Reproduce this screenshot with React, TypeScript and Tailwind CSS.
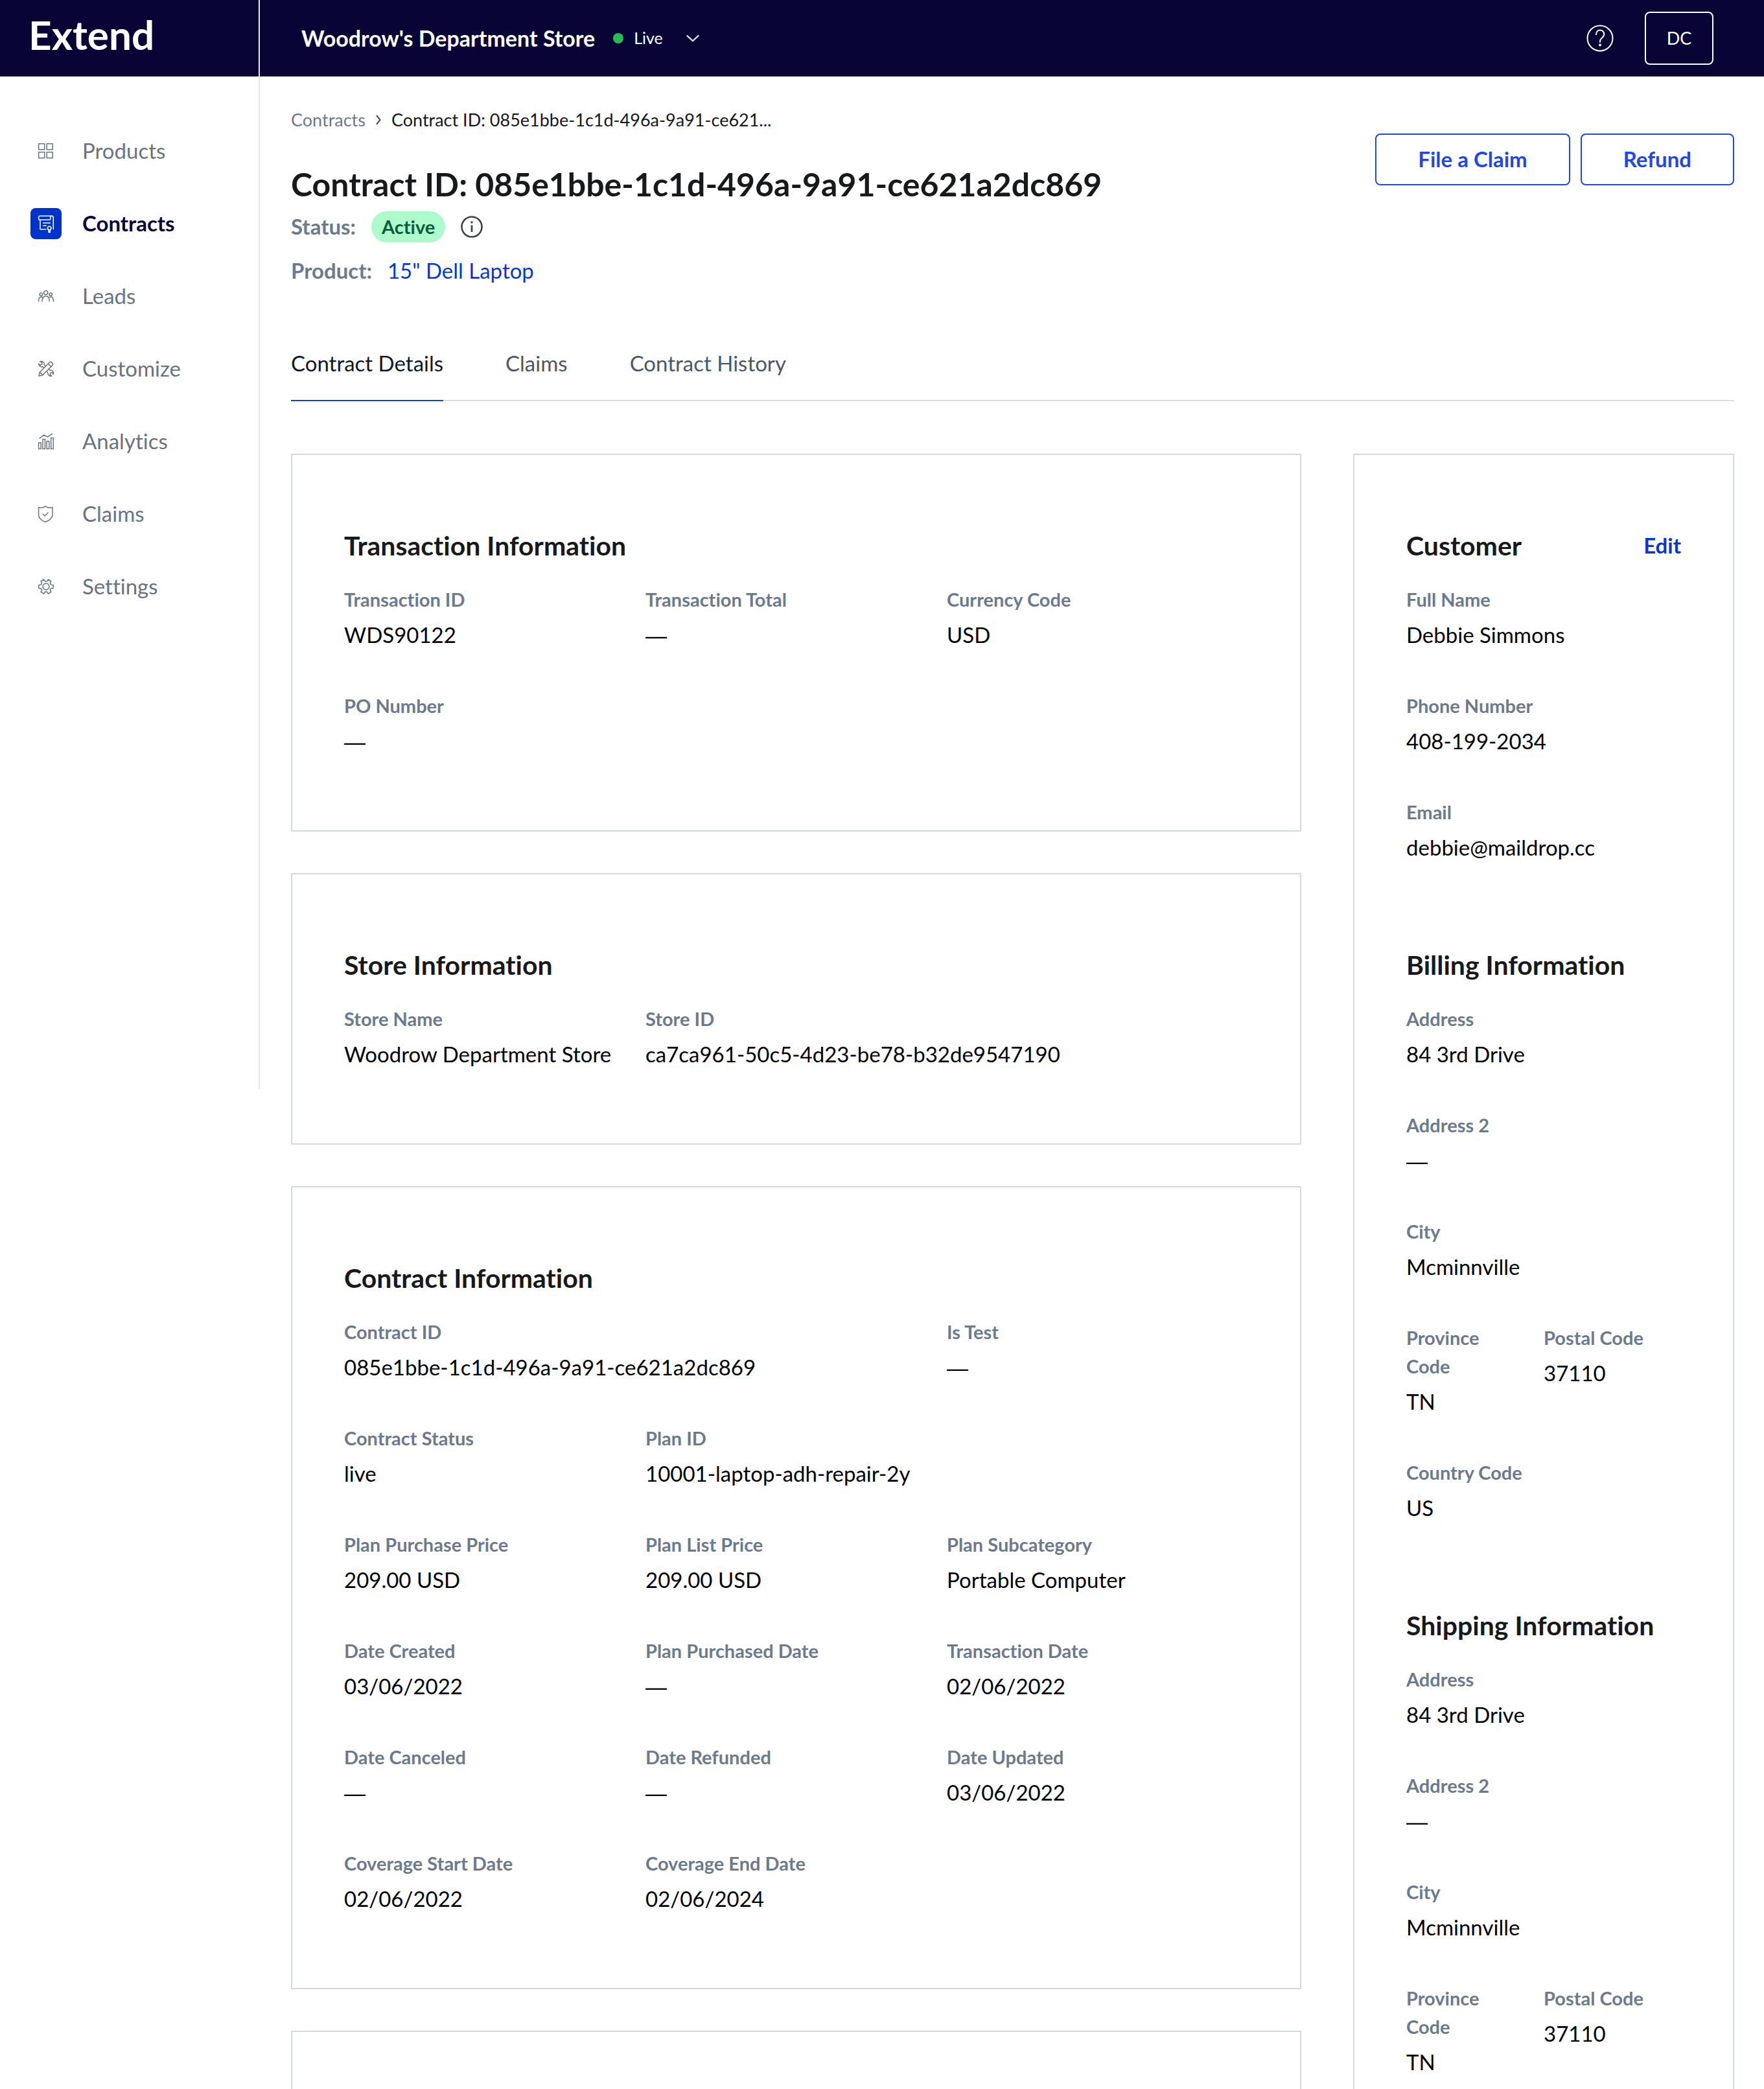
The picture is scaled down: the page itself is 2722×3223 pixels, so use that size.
import { useState } from "react";
import type { ReactNode } from "react";
import clsx from "clsx";

type FieldData = { label: string; value?: string; wide?: boolean };

const transactionFields: FieldData[] = [
  { label: "Transaction ID", value: "WDS90122" },
  { label: "Transaction Total" },
  { label: "Currency Code", value: "USD" },
  { label: "PO Number" },
];

const storeFields: FieldData[] = [
  { label: "Store Name", value: "Woodrow Department Store" },
  { label: "Store ID", value: "ca7ca961-50c5-4d23-be78-b32de9547190", wide: true },
];

const contractFields: FieldData[] = [
  { label: "Contract ID", value: "085e1bbe-1c1d-496a-9a91-ce621a2dc869", wide: true },
  { label: "Is Test" },
  { label: "Contract Status", value: "live" },
  { label: "Plan ID", value: "10001-laptop-adh-repair-2y", wide: true },
  { label: "Plan Purchase Price", value: "209.00 USD" },
  { label: "Plan List Price", value: "209.00 USD" },
  { label: "Plan Subcategory", value: "Portable Computer" },
  { label: "Date Created", value: "03/06/2022" },
  { label: "Plan Purchased Date" },
  { label: "Transaction Date", value: "02/06/2022" },
  { label: "Date Canceled" },
  { label: "Date Refunded" },
  { label: "Date Updated", value: "03/06/2022" },
  { label: "Coverage Start Date", value: "02/06/2022" },
  { label: "Coverage End Date", value: "02/06/2024" },
];

const customerFields: FieldData[] = [
  { label: "Full Name", value: "Debbie Simmons", wide: true },
  { label: "Phone Number", value: "408-199-2034", wide: true },
  { label: "Email", value: "debbie@maildrop.cc", wide: true },
];

const addressFields: FieldData[] = [
  { label: "Address", value: "84 3rd Drive", wide: true },
  { label: "Address 2", wide: true },
  { label: "City", value: "Mcminnville", wide: true },
  { label: "Province Code", value: "TN" },
  { label: "Postal Code", value: "37110" },
];

const billingFields: FieldData[] = [
  ...addressFields,
  { label: "Country Code", value: "US", wide: true },
];

function Icon({ children }: { children: ReactNode }) {
  return (
    <svg
      viewBox="0 0 24 24"
      className="h-6 w-6 overflow-visible"
      fill="none"
      stroke="currentColor"
      strokeWidth="1.5"
      strokeLinejoin="round"
      strokeLinecap="round"
      aria-hidden="true"
    >
      {children}
    </svg>
  );
}

const navItems: { label: string; icon: ReactNode }[] = [
  {
    label: "Products",
    icon: (
      <Icon>
        <path d="M.7.8h9v9h-9zM13.2.8h9v9h-9zM.7 13.7h9v9h-9zM13.2 13.7h9v9h-9z" />
      </Icon>
    ),
  },
  {
    label: "Contracts",
    icon: (
      <Icon>
        <path d="M3 6.2H1.8C1 6.2.6 5.400.6 3.400.6 1.300 1.300.3 2.600.3h18.200c1.600 0 2.500 1 2.500 2.600v17.600" />
        <path d="M20.800.3c-1.500 0-2 .9-2 2.400v2.400c0 .8-.4 1.100-1.200 1.100H3v14.600h9" />
        <path d="M7.800 11h10.500M7.800 15.300h4.400" />
        <circle cx="17.200" cy="19" r="2.700" strokeWidth="1.600" />
        <path d="M16.200 21.800v3.800l1-.8 1 .8v-3.800" strokeWidth="1.600" />
      </Icon>
    ),
  },
  {
    label: "Leads",
    icon: (
      <Icon>
        <circle cx="11.700" cy="6.600" r="3" />
        <circle cx="4.400" cy="9.300" r="2.200" />
        <circle cx="19.200" cy="9.300" r="2.200" />
        <path d="M6.200 19.800c.2-5.400 1.800-8 5.500-8s5.400 2.600 5.600 8" />
        <path d="M.5 20c.1-4.600 1.200-7 3.900-7 .8 0 1.500.2 2 .6M23.400 20c-.1-4.600-1.300-7-4-7-.9 0-1.500.2-2.100.6" />
      </Icon>
    ),
  },
  {
    label: "Customize",
    icon: (
      <Icon>
        <path d="M1 23l1.400-5.700L17.600 2a2.100 2.100 0 0 1 3 0l1.500 1.500a2.100 2.100 0 0 1 0 3L6.900 21.700z" />
        <path d="M15.500 4.200l4.500 4.500M2.400 17.300l4.500 4.400" />
        <path d="M8.800 10.600L6.700 8.700C4.200 9.400.9 7.700.8 4.300l2.700 1.900 2.400-1.600L5.500 2 2.900.8C6.200-.4 9.700 2 9.300 5.800l2.200 2.300" />
        <path d="M12.700 16l2.200 2c-.6 3.200 2.400 6 5.800 5.200l-2.400-1.800.4-2.700 2.600-.8 2 2.300c1-3.500-2-6.600-5.500-6l-2-2" />
      </Icon>
    ),
  },
  {
    label: "Analytics",
    icon: (
      <Icon>
        <path d="M.6 14h3.600v9.400H.6zM6.900 8.800h3.600v14.600H6.900zM13.200 11.800h3.600v11.600h-3.600zM19.700 6.400h3.600v17h-3.600z" />
        <path d="M2.200 7.200l6.700-5 5.600 3L21.400.3" />
      </Icon>
    ),
  },
  {
    label: "Claims",
    icon: (
      <Icon>
        <path d="M11 .2C8.200 2.500 4.300 3 .6 1.600v11.800c0 5 4.800 8.600 10.400 11 5.600-2.400 11-6 11-11V1.600C18 3 13.900 2.500 11 .2z" />
        <path d="M7.200 12.300l2.900 2.700 5-5" />
      </Icon>
    ),
  },
  {
    label: "Settings",
    icon: (
      <Icon>
        <path d="M19.700 9.200l3.500.2v5.200l-3.500.2-1.400 2.500 1.500 3.100-4.400 2.600-2-2.900h-2.800l-2 2.900-4.400-2.600 1.500-3.100-1.400-2.500-3.500-.2V9.400l3.500-.2 1.400-2.500-1.500-3.100L8.600 1l2 2.900h2.800l2-2.900 4.400 2.600-1.500 3.100z" />
        <circle cx="12" cy="12" r="4.900" />
      </Icon>
    ),
  },
];

function Header() {
  return (
    <header className="flex shrink-0 items-stretch bg-[#080536] text-white">
      <div className="flex w-[401px] shrink-0 items-center border-r-2 border-[#e8e8ee] pb-3 pl-11">
        <a href="#home" className="text-[62px] leading-[64px] font-bold">
          Extend
        </a>
      </div>
      <div className="flex flex-1 items-center justify-between py-[18px] pr-[78px] pl-16">
        <button type="button" className="flex items-center">
          <span className="text-[34px] leading-[48px] font-bold">
            Woodrow's Department Store
          </span>
          <span className="ml-7 h-4 w-4 rounded-full bg-[#27bd54]" />
          <span className="ml-4 text-[25px]">Live</span>
          <svg
            viewBox="0 0 20 10"
            className="ml-9 h-[10px] w-5 overflow-visible"
            fill="none"
            stroke="#d8d8e2"
            strokeWidth="2.4"
            aria-hidden="true"
          >
            <path d="M.8.6L10 9.200 19.200.6" />
          </svg>
        </button>
        <div className="flex items-center gap-12">
          <button type="button" aria-label="Help">
            <svg viewBox="0 0 42 42" className="h-[42px] w-[42px]" fill="none" stroke="#fff" aria-hidden="true">
              <circle cx="21" cy="21" r="19.500" strokeWidth="2" />
              <path
                d="M15 15.200c0-4 2.600-6.700 6-6.700s6.300 2.500 6.300 6c0 3-1.600 4.600-3.600 6.200-1.900 1.500-2.700 2.700-2.700 5v1"
                strokeWidth="2"
                strokeLinecap="round"
              />
              <circle cx="21" cy="31.500" r="1.900" fill="#fff" stroke="none" />
            </svg>
          </button>
          <button
            type="button"
            className="h-[82px] w-[106px] rounded-lg border-2 border-white text-[27px]"
          >
            DC
          </button>
        </div>
      </div>
    </header>
  );
}

function Sidebar() {
  return (
    <aside className="h-[1562px] w-[401px] shrink-0 border-r-2 border-[#e4e7ea] pt-[91px] pl-[47px]">
      <nav className="flex flex-col gap-16">
        {navItems.map(({ label, icon }) => {
          const active = label === "Contracts";
          return (
            <a
              key={label}
              href={`#${label.toLowerCase()}`}
              className={clsx(
                "flex h-12 items-center gap-8 text-[33px]",
                active ? "font-bold text-[#080536]" : "text-[#6a737d]",
              )}
            >
              <span
                className={clsx(
                  "flex h-12 w-12 items-center justify-center rounded-lg",
                  active && "bg-[#0033cc] text-white",
                )}
              >
                {icon}
              </span>
              {label}
            </a>
          );
        })}
      </nav>
    </aside>
  );
}

function Field({ label, value, wide }: FieldData) {
  return (
    <div className={clsx("pb-16", wide ? "col-span-2" : "pr-10")}>
      <dt className="text-[29px] leading-[44px] font-bold text-[#6b7a8c]">{label}</dt>
      <dd className="mt-2 h-12 text-[33px] leading-[48px] text-black">
        {value ?? <span className="font-['Liberation_Sans',sans-serif]">—</span>}
      </dd>
    </div>
  );
}

function Section({
  title,
  fields,
  narrow,
  action,
}: {
  title: string;
  fields: FieldData[];
  narrow?: boolean;
  action?: ReactNode;
}) {
  return (
    <section>
      <div className="flex items-center justify-between">
        <h2 className="text-[41px] leading-[56px] font-bold text-[#17191b]">{title}</h2>
        {action}
      </div>
      <dl className={clsx("mt-[33px] grid", narrow ? "grid-cols-2" : "grid-cols-3")}>
        {fields.map((field) => (
          <Field key={field.label} {...field} />
        ))}
      </dl>
    </section>
  );
}

function Card({ children, className }: { children?: ReactNode; className?: string }) {
  return (
    <div className={clsx("border-2 border-[#d3d9de] px-20 pt-28 pb-[50px]", className)}>
      {children}
    </div>
  );
}

function PageHeader() {
  return (
    <div className="flex items-start justify-between">
      <div>
        <nav className="flex items-center text-[27px] leading-[38px]" aria-label="Breadcrumb">
          <a href="#contracts" className="text-[#6b7a8c]">
            Contracts
          </a>
          <svg
            viewBox="0 0 8 14"
            className="mx-4 h-[14px] w-2 overflow-visible"
            fill="none"
            stroke="#4b5866"
            strokeWidth="2.2"
            aria-hidden="true"
          >
            <path d="M1 0l5.500 7L1 14" />
          </svg>
          <span className="text-[#17191b]">
            Contract ID: 085e1bbe-1c1d-496a-9a91-ce621...
          </span>
        </nav>
        <h1 className="mt-12 text-[50px] leading-[64px] font-bold text-[#17191b]">
          Contract ID: 085e1bbe-1c1d-496a-9a91-ce621a2dc869
        </h1>
        <div className="mt-[10px] flex h-12 items-center gap-6 text-[33px]">
          <span className="font-bold text-[#6b7a8c]">Status:</span>
          <span className="flex h-12 items-center rounded-full bg-[#adfacb] px-4 text-[29px] font-bold text-[#0b5c3b]">
            Active
          </span>
          <button type="button" aria-label="Status info">
            <svg viewBox="0 0 34 34" className="h-[34px] w-[34px]" fill="none" stroke="#3c4652" aria-hidden="true">
              <circle cx="17" cy="17" r="15.500" strokeWidth="2.600" />
              <path d="M17 14.500v10.500" strokeWidth="2.800" />
              <circle cx="17" cy="10" r="1.800" fill="#3c4652" stroke="none" />
            </svg>
          </button>
        </div>
        <div className="mt-5 flex h-12 items-center gap-6 text-[33px]">
          <span className="font-bold text-[#6b7a8c]">Product:</span>
          <a href="#product" className="text-[#0a36d1]">
            15" Dell Laptop
          </a>
        </div>
      </div>
      <div className="flex gap-4 pt-10">
        <button
          type="button"
          className="h-20 rounded-lg border-2 border-[#2148e0] px-16 text-[33px] font-bold text-[#2148e0]"
        >
          File a Claim
        </button>
        <button
          type="button"
          className="h-20 rounded-lg border-2 border-[#2148e0] px-16 text-[33px] font-bold text-[#2148e0]"
        >
          Refund
        </button>
      </div>
    </div>
  );
}

function Tabs() {
  const [tab, setTab] = useState("Contract Details");

  return (
    <div role="tablist" className="mt-[94px] flex gap-24 border-b-2 border-[#d9dee2]">
      {["Contract Details", "Claims", "Contract History"].map((name) => (
        <button
          key={name}
          type="button"
          role="tab"
          aria-selected={tab === name}
          onClick={() => setTab(name)}
          className={clsx(
            "-mb-[2px] border-b-2 pb-[33px] text-[33px] leading-[48px]",
            tab === name
              ? "border-[#1240e8] text-[#0c1a2b]"
              : "border-transparent text-[#4b5866]",
          )}
        >
          {name}
        </button>
      ))}
    </div>
  );
}

export default function App() {
  return (
    <div className="flex h-screen flex-col overflow-hidden bg-white font-[Lato,sans-serif] [font-variant-ligatures:no-common-ligatures]">
      <Header />
      <div className="flex min-h-0 flex-1">
        <Sidebar />
        <main className="min-w-0 flex-1 overflow-y-auto pt-12 pr-[46px] pl-12 [scrollbar-width:none]">
          <PageHeader />
          <Tabs />
          <div className="mt-[81px] grid grid-cols-[1fr_588px] gap-20 pb-20">
            <div className="flex flex-col gap-16">
              <Card>
                <Section title="Transaction Information" fields={transactionFields} />
              </Card>
              <Card>
                <Section title="Store Information" fields={storeFields} />
              </Card>
              <Card>
                <Section title="Contract Information" fields={contractFields} />
              </Card>
              <Card className="flex-1" />
            </div>
            <Card className="flex flex-col gap-[66px]">
              <Section
                title="Customer"
                fields={customerFields}
                narrow
                action={
                  <button type="button" className="text-[33px] font-bold text-[#0a36d1]">
                    Edit
                  </button>
                }
              />
              <Section title="Billing Information" fields={billingFields} narrow />
              <Section title="Shipping Information" fields={addressFields} narrow />
            </Card>
          </div>
        </main>
      </div>
    </div>
  );
}
